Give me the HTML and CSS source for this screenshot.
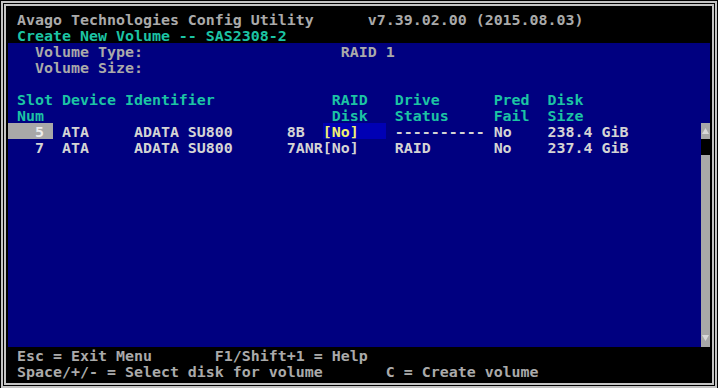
FILE: index.html
```html
<!DOCTYPE html>
<html lang="en">
<head>
    <meta charset="UTF-8">
    <title>Avago Technologies Config Utility</title>
    <link rel="stylesheet" href="styles.css">
</head>
<body>

<div class="outer">
  <div class="inner">

    <div class="header">
      <div class="line"> Avago Technologies Config Utility      v7.39.02.00 (2015.08.03)</div>
      <div class="line cyan"> Create New Volume -- SAS2308-2</div>
    </div>

    <div class="panel">
      <div class="rows">
        <div class="line">   Volume Type:                      RAID 1</div>
        <div class="line">   Volume Size:</div>
        <div class="line"> </div>
        <div class="line cyan"> Slot Device Identifier             RAID   Drive      Pred  Disk</div>
        <div class="line cyan"> Num                                Disk   Status     Fail  Size</div>
        <div class="line data"><span class="slot-sel">   5 </span> ATA     ADATA SU800      8B  <span class="pick">[No]   </span> ---------- No    238.4 GiB</div>
        <div class="line data">   7  ATA     ADATA SU800      7ANR[No]    RAID       No    237.4 GiB</div>
      </div>

      <!-- scroll bar column -->
      <div class="scroll">
        <div class="arrow">
          <svg width="9" height="16" viewBox="0 0 9 16"><polygon points="4.5,5 8,11 1,11" fill="#d8d8d8"/></svg>
        </div>
        <div class="thumb"></div>
        <div class="track"></div>
        <div class="arrow">
          <svg width="9" height="16" viewBox="0 0 9 16"><polygon points="1,4 8,4 4.5,10" fill="#d8d8d8"/></svg>
        </div>
      </div>
    </div>

    <div class="footer">
      <div class="line"> Esc = Exit Menu       F1/Shift+1 = Help</div>
      <div class="line"> Space/+/- = Select disk for volume       C = Create volume</div>
    </div>

  </div>
</div>

</body>
</html>
```

FILE: styles.css
```css
html, body {
    margin: 0;
    background: #000;
}
body {
    font-family: 'DejaVu Sans Mono', 'Liberation Mono', monospace;
    font-size: 14.95px;
    font-weight: bold;
    color: #aaaaaa;
}
.outer {
    box-sizing: border-box;
    margin: 1px 1px 0 1px;
    height: 387px;
    border: 2px solid #c4c4c4;
    padding: 1px;
}
.inner {
    box-sizing: border-box;
    height: 100%;
    border: 2px solid #c4c4c4;
    padding: 0 2px;
    display: flex;
    flex-direction: column;
}
/* one text-mode row: 16px tall, glyphs sit a little low like the VGA font */
.line {
    box-sizing: border-box;
    height: 16px;
    padding-top: 2px;
    line-height: 14px;
    white-space: pre;
}
.cyan {
    color: #1cc4a4;
}
.header {
    padding-top: 5px;
}
.panel {
    background: #000080;
    height: 304px;
    display: flex;
}
.rows {
    flex: 1;
}
.data {
    color: #d4d4d4;
}
.slot-sel,
.pick {
    display: inline-block;
    box-sizing: border-box;
    height: 16px;
    margin-top: -2px;
    padding-top: 2px;
    vertical-align: top;
}
.slot-sel {
    background: #a8a8a8;
    color: #ececec;
}
.pick {
    background: #0000b4;
    color: #f0f070;
}
.scroll {
    width: 9px;
    padding-top: 80px;
    display: flex;
    flex-direction: column;
}
.arrow {
    height: 16px;
    background: #a8a8a8;
}
.arrow svg {
    display: block;
}
.thumb {
    height: 16px;
    background: #000;
}
.track {
    flex: 1;
    background: #a8a8a8;
}
```
